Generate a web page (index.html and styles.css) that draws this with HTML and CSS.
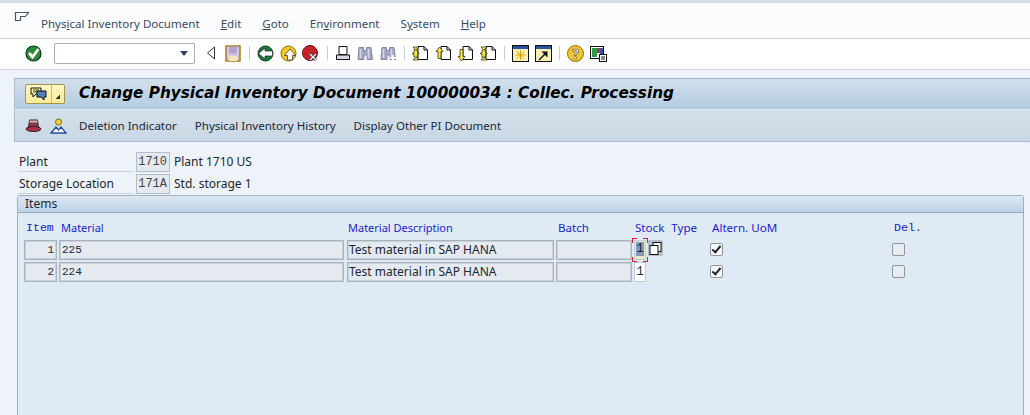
FILE: index.html
```html
<!DOCTYPE html>
<html lang="en">
<head>
  <meta charset="UTF-8">
  <title>Change Physical Inventory Document</title>
  <link rel="stylesheet" href="styles.css">
</head>
<body>
  <svg class="defs" width="0" height="0">
    <symbol id="page" viewBox="0 0 17 17">
      <path d="M6 1.500h6l3.500 3.500v9.500H6z" fill="#fff" stroke="#111"/><path d="M12 1.500V5h3.500" fill="none" stroke="#111"/>
    </symbol>
    <symbol id="binoc" viewBox="0 0 17 17">
      <path d="M2 2.500h4.500v3h3v-3H14l1.500 12h-5.500V10H7v4.500H1z" fill="#a4a9c6" stroke="#8187a8"/>
      <path d="M3.500 4v9M11.500 4v9" stroke="#d5d8e8" stroke-width="1.500"/>
    </symbol>
  </svg>

  <div class="menubar">
    <svg class="menu-icon" width="16" height="12" viewBox="0 0 16 12"><path d="M1.500 1.500h13l-3 4h-5v4h-5z" fill="none" stroke="#47566b" stroke-width="1.200"/></svg>
    <span class="menu-item">Phys<u>i</u>cal Inventory Document</span>
    <span class="menu-item"><u>E</u>dit</span>
    <span class="menu-item"><u>G</u>oto</span>
    <span class="menu-item">En<u>v</u>ironment</span>
    <span class="menu-item">S<u>y</u>stem</span>
    <span class="menu-item"><u>H</u>elp</span>
  </div>

  <div class="toolbar">
    <span class="tool"><svg width="17" height="17" viewBox="0 0 17 17"><circle cx="8.500" cy="8.500" r="7.500" fill="#2a8a38" stroke="#0c3a14" stroke-width="1.200"/><path d="M4 8l3.500 4L13.500 4" fill="none" stroke="#fff" stroke-width="2.800"/></svg></span>
    <span class="combo"><span class="combo-arrow"></span></span>
    <span class="tool tool-first"><svg width="10" height="14" viewBox="0 0 10 14"><path d="M8.500 1v12L1.500 7z" fill="#fff" stroke="#333"/></svg></span>
    <span class="tool"><svg width="16" height="17" viewBox="0 0 16 17"><rect x="1" y="1" width="14" height="15" fill="#d2c8e4" stroke="#b07a20" stroke-width="1.500"/><rect x="4" y="1.500" width="8" height="7" fill="#b3a3d2"/><rect x="4" y="11" width="8" height="5" fill="#f7e6ae"/></svg></span>
    <span class="sep"></span>
    <span class="tool"><svg width="17" height="17" viewBox="0 0 17 17"><circle cx="8.500" cy="8.500" r="7.500" fill="#157a35" stroke="#0b3d1a"/><path d="M1.500 8.500L8 3v3h7.500v5H8v3z" fill="#fff" stroke="#222" stroke-width=".7"/></svg></span>
    <span class="tool"><svg width="17" height="17" viewBox="0 0 17 17"><circle cx="8.500" cy="8.500" r="7.500" fill="#f4c81e" stroke="#8a6a0a"/><path d="M10 4l5.500 6.500h-3V15h-5v-4.500h-3z" fill="#fff" stroke="#222" stroke-width=".7"/></svg></span>
    <span class="tool"><svg width="17" height="17" viewBox="0 0 17 17"><circle cx="8" cy="8" r="7.500" fill="#c4202b" stroke="#6b0d14"/><path d="M8 9l6 6M14 9l-6 6" stroke="#333" stroke-width="2.600"/><path d="M8 9l6 6M14 9l-6 6" stroke="#fff" stroke-width="1.300"/></svg></span>
    <span class="sep"></span>
    <span class="tool"><svg width="16" height="16" viewBox="0 0 16 16"><path d="M4 1.500h8v8H4z" fill="#fff" stroke="#111"/><path d="M1.500 10h13v4.500h-13z" fill="#d3d9e4" stroke="#111"/></svg></span>
    <span class="tool"><svg width="17" height="17"><use href="#binoc"/></svg></span>
    <span class="tool"><svg width="17" height="17"><use href="#binoc"/><path d="M13 10v6M10 13h6" stroke="#fff" stroke-width="1.800"/></svg></span>
    <span class="sep"></span>
    <span class="tool"><svg width="17" height="17"><use href="#page"/><path d="M1 2h6L4 5h1.500v3H7v1H5.500v3H4l3 3H1l2.500-3H2V9H.5V8H2V5h1.500z" fill="#f4e43a" stroke="#222" stroke-width=".7"/></svg></span>
    <span class="tool"><svg width="17" height="17"><use href="#page"/><path d="M4.500 2L8 6.500H6v7H3v-7H1z" fill="#f4e43a" stroke="#222" stroke-width=".7"/></svg></span>
    <span class="tool"><svg width="17" height="17"><use href="#page"/><path d="M4.500 16L1 11.500h2v-7h3v7h2z" fill="#f4e43a" stroke="#222" stroke-width=".7"/></svg></span>
    <span class="tool"><svg width="17" height="17"><use href="#page"/><path d="M1 2h6L4 5h1.500v3H7v1H5.500v3H4l3 3H1l2.500-3H2V9H.5V8H2V5h1.500z" fill="#f4e43a" stroke="#222" stroke-width=".7"/></svg></span>
    <span class="sep"></span>
    <span class="tool"><svg width="17" height="17" viewBox="0 0 17 17"><rect x=".500" y=".500" width="16" height="16" fill="#f7efb4" stroke="#111"/><rect x="1" y="1" width="15" height="3" fill="#2b4f9c"/><path d="M8.500 5v10M3.500 10h10M5 6.500l7 7M12 6.500l-7 7" stroke="#d8a20f"/></svg></span>
    <span class="tool"><svg width="17" height="17" viewBox="0 0 17 17"><rect x=".500" y=".500" width="16" height="16" fill="#f7efb4" stroke="#111"/><rect x="1" y="1" width="15" height="3" fill="#2b4f9c"/><path d="M4 15l7-7" stroke="#111" stroke-width="1.500"/><path d="M6.500 6.500h6v6z" fill="#111"/></svg></span>
    <span class="sep"></span>
    <span class="tool"><svg width="17" height="17" viewBox="0 0 17 17"><circle cx="8.500" cy="8.500" r="8" fill="#f4c52a" stroke="#8a6a0a"/><text class="help-mark" x="8.500" y="13.500" text-anchor="middle">?</text></svg></span>
    <span class="tool"><svg width="17" height="17" viewBox="0 0 17 17"><rect x=".500" y="1.500" width="13" height="12" fill="#fff" stroke="#111"/><rect x="2" y="3" width="5" height="9" fill="#2f9a4a"/><rect x="7" y="3" width="3" height="5" fill="#c83333"/><rect x="10" y="3" width="3" height="6" fill="#3a4fb0"/><rect x="9.500" y="9.500" width="7" height="7" fill="#fff" stroke="#111"/><path d="M11 12h4M11 14h4" stroke="#111"/></svg></span>
  </div>

  <div class="screen">
    <div class="title-bar">
      <span class="title-btn">
        <span class="title-btn-main"><svg width="17" height="15" viewBox="0 0 17 15"><path d="M1 1h10v6H6L3 10V7H1z" fill="#fff6a8" stroke="#111"/><path d="M3 3h6M3 5h6" stroke="#111" stroke-width=".8"/><path d="M7 4h9v6h-2v3l-3-3H7z" fill="#4f7fbd" stroke="#111"/></svg></span>
        <span class="title-btn-arrow"></span>
      </span>
      <h1 class="title">Change Physical Inventory Document 100000034 : Collec. Processing</h1>
    </div>
    <div class="app-bar">
      <svg class="app-icon" width="17" height="15" viewBox="0 0 17 15"><path d="M4.500 2h8l1 8h-10z" fill="#8a3a4c" stroke="#3b1a22"/><path d="M4.500 3.500h8" stroke="#c9b8bd" stroke-width="2"/><ellipse cx="8.500" cy="11" rx="7.500" ry="2.500" fill="#a8324a" stroke="#3b1a22"/></svg>
      <svg class="app-icon" width="17" height="16" viewBox="0 0 17 16"><circle cx="8.500" cy="4" r="3" fill="#f4d23a" stroke="#7c6510"/><path d="M1 15l5-6 2.500 3 2.500-3 5 6z" fill="#fff" stroke="#1d4f9a" stroke-width="1.300"/></svg>
      <span class="app-btn app-btn-first">Deletion Indicator</span>
      <span class="app-btn">Physical Inventory History</span>
      <span class="app-btn">Display Other PI Document</span>
    </div>

    <div class="head-fields">
      <div class="head-row">
        <label class="head-label">Plant</label>
        <span class="head-value">1710</span>
        <span class="head-text">Plant 1710 US</span>
      </div>
      <div class="head-row">
        <label class="head-label">Storage Location</label>
        <span class="head-value">171A</span>
        <span class="head-text">Std. storage 1</span>
      </div>
    </div>

    <div class="group">
      <div class="group-title">Items</div>
      <div class="cols">
        <span class="col c-item mono">Item</span>
        <span class="col c-mat col-small">Material</span>
        <span class="col c-desc col-small">Material Description</span>
        <span class="col c-batch">Batch</span>
        <span class="col c-stock col-wide">Stock Type</span>
        <span class="col c-uom">Altern. UoM</span>
        <span class="col c-del mono">Del.</span>
      </div>
      <div class="row">
        <span class="cell c-item mono right">1</span>
        <span class="cell c-mat mono">225</span>
        <span class="cell c-desc">Test material in SAP HANA</span>
        <span class="cell c-batch"></span>
        <span class="stock-wrap">
          <span class="stock stock-focus mono"><span class="stock-sel">1</span></span>
          <span class="f4"><svg width="13" height="13" viewBox="0 0 13 13"><rect x="4" y=".500" width="8" height="9" fill="#fff" stroke="#111"/><rect x="1" y="3.500" width="8" height="9" fill="#fff" stroke="#111"/></svg></span>
        </span>
        <span class="check-slot c-uom"><span class="check on"></span></span>
        <span class="check-slot c-del"><span class="check"></span></span>
      </div>
      <div class="row">
        <span class="cell c-item mono right">2</span>
        <span class="cell c-mat mono">224</span>
        <span class="cell c-desc">Test material in SAP HANA</span>
        <span class="cell c-batch"></span>
        <span class="stock-wrap">
          <span class="stock mono">1</span>
        </span>
        <span class="check-slot c-uom"><span class="check on"></span></span>
        <span class="check-slot c-del"><span class="check"></span></span>
      </div>
    </div>
  </div>
</body>
</html>
```

FILE: styles.css
```css
html, body {
  margin: 0;
  height: 415px;
  overflow: hidden;
}

body {
  font-family: "Noto Sans", "Open Sans", sans-serif;
  font-size: 12px;
  color: #1c2733;
  background-color: #eef3f9;
}

.defs {
  position: absolute;
}

.mono {
  font-family: "Liberation Mono", monospace;
}

/* menu */
.menubar {
  height: 39px;
  box-sizing: border-box;
  display: flex;
  align-items: center;
  padding: 6px 0 0 14px;
  border-top: 3px solid #d5dde6;
  border-bottom: 1px solid #c9ced4;
  background-color: #fbfcfe;
  font-size: 11.55px;
}

.menu-icon {
  margin: -14px 11px 0 0;
}

.menu-item {
  margin-right: 21px;
  color: #3a4a63;
}

/* toolbar */
.toolbar {
  box-sizing: border-box;
  height: 31px;
  display: flex;
  align-items: center;
  padding: 0 0 2px 22px;
  background-color: #fff;
  border-bottom: 1px solid #cdd3d9;
}

.tool {
  width: 22.5px;
  display: flex;
  justify-content: center;
}

.tool-first {
  margin-left: 4.5px;
}

.sep {
  width: 10px;
  height: 14px;
  background: linear-gradient(#c4ced8, #c4ced8) center / 1px 100% no-repeat;
}

.help-mark {
  font-size: 14px;
  font-weight: bold;
  fill: #fff;
  stroke: #222;
  stroke-width: .5px;
}

.combo {
  width: 141px;
  height: 21px;
  box-sizing: border-box;
  margin-left: 9.5px;
  border: 1px solid #a9b0b8;
  border-radius: 2px;
  background-color: #fff;
  position: relative;
}

.combo-arrow {
  position: absolute;
  right: 6px;
  top: 7px;
  border-top: 5px solid #2d3f5c;
  border-left: 4px solid transparent;
  border-right: 4px solid transparent;
}

/* title */
.screen {
  margin: 8px 0 0 14px;
}

.title-bar {
  height: 30px;
  display: flex;
  align-items: center;
  border-top: 1px solid #9fb5c8;
  border-left: 1px solid #a9bccc;
  background: linear-gradient(#d2e0ec, #b3cbe0);
}

.title-btn {
  display: flex;
  height: 18px;
  margin-left: 10px;
  border: 1px solid #a8944c;
  border-radius: 2px;
  background: linear-gradient(#fdf8c4, #f8eb96);
}

.title-btn-main {
  width: 25px;
  display: flex;
  align-items: center;
  justify-content: center;
  border-right: 1px solid #c4b978;
}

.title-btn-arrow {
  width: 12px;
  background: linear-gradient(135deg, transparent 0 50%, #333 50%) 4px 10px / 4px 4px no-repeat;
}

.title {
  margin: 0 0 2px 14px;
  font-family: "DejaVu Sans", sans-serif;
  font-size: 15.25px;
  font-style: italic;
  font-weight: bold;
  color: #000;
  white-space: nowrap;
}

.app-bar {
  height: 31px;
  display: flex;
  align-items: center;
  padding-left: 10px;
  border-left: 1px solid #a9bccc;
  border-bottom: 1px solid #a9bccc;
  border-top: 1px solid #e4edf4;
  background: linear-gradient(#d4e1eb, #c8d7e4);
  font-size: 11.55px;
}

.app-icon {
  margin-right: 8px;
}

.app-btn {
  margin-right: 18px;
}

.app-btn-first {
  margin-left: 4px;
}

/* header fields */
.head-fields {
  margin: 9px 0 0 4px;
}

.head-row {
  display: flex;
  align-items: center;
  height: 21px;
  margin-bottom: 1px;
}

.head-label {
  width: 115px;
  height: 20px;
  line-height: 19px;
  box-sizing: border-box;
  padding-left: 1px;
  margin-right: 3px;
  border-bottom: 1px solid #c9d2da;
}

.head-value {
  width: 34px;
  height: 20px;
  box-sizing: border-box;
  line-height: 18px;
  text-align: right;
  padding-right: 2px;
  border: 1px solid #b5bfc8;
  background-color: #e4e9ef;
  font-family: "Liberation Mono", monospace;
  color: #444;
}

.head-text {
  margin-left: 4px;
}

/* items group */
.group {
  margin: 0 6px 0 3px;
  height: 220px;
  box-sizing: border-box;
  border: 1px solid #9db2c5;
  border-bottom: none;
  border-radius: 3px 3px 0 0;
  background-color: #dfeaf5;
}

.group-title {
  height: 16px;
  line-height: 15px;
  padding-left: 7px;
  border-bottom: 1px solid #93a9bd;
  background: linear-gradient(#dce8f2, #bed3e6);
}

.cols {
  display: flex;
  margin: 4px 0 0 0;
  height: 23px;
  line-height: 22px;
  color: #1a1ec8;
  font-size: 11.6px;
}

.col {
  display: block;
  box-sizing: border-box;
  white-space: nowrap;
}

.col-small {
  font-size: 11px;
}

.col-wide {
  word-spacing: 4px;
}

.c-item { width: 33px; margin-left: 6px; }
.c-mat { width: 285px; margin-left: 2px; }
.c-desc { width: 207px; margin-left: 3px; }
.c-batch { width: 76px; margin-left: 2px; }
.c-stock { width: 74px; margin-left: 3px; }
.c-uom { width: 182px; margin-left: 3px; }
.c-del { width: 30px; }

.col.c-item { padding-left: 2px; }
.col.c-mat { padding-left: 2px; }
.col.c-desc { padding-left: 1px; }
.col.c-batch { padding-left: 2px; }

.row {
  display: flex;
  align-items: center;
  height: 20px;
  margin-bottom: 2px;
}

.cell {
  height: 20px;
  box-sizing: border-box;
  line-height: 18px;
  padding: 0 1px;
  border: 1px solid #a9b3bc;
  box-shadow: inset 0 0 0 1px #c8d0d8;
  background-color: #e4eaf0;
  white-space: nowrap;
}

.cell.mono {
  font-size: 11px;
  padding: 0 2px;
}

.right {
  text-align: right;
}

.stock-wrap {
  display: flex;
  width: 74px;
  margin-left: 2px;
}

.stock {
  width: 12px;
  height: 20px;
  box-sizing: border-box;
  line-height: 18px;
  text-align: center;
  border: 1px solid #c3ccd4;
  background-color: #fff;
}

/* red corner brackets round the field with the cursor */
.stock-focus {
  position: relative;
  background-color: #eceac4;
}

.stock-focus::after {
  content: "";
  position: absolute;
  left: -3px;
  right: -3px;
  top: -3px;
  bottom: -3px;
  background:
    linear-gradient(#d02030, #d02030) 0 0 / 5px 1px no-repeat,
    linear-gradient(#d02030, #d02030) 0 0 / 1px 5px no-repeat,
    linear-gradient(#d02030, #d02030) 100% 0 / 5px 1px no-repeat,
    linear-gradient(#d02030, #d02030) 100% 0 / 1px 5px no-repeat,
    linear-gradient(#d02030, #d02030) 0 100% / 5px 1px no-repeat,
    linear-gradient(#d02030, #d02030) 0 100% / 1px 5px no-repeat,
    linear-gradient(#d02030, #d02030) 100% 100% / 5px 1px no-repeat,
    linear-gradient(#d02030, #d02030) 100% 100% / 1px 5px no-repeat;
}

.stock-sel {
  display: block;
  background-color: #7f9cbb;
  height: 14px;
  line-height: 14px;
  margin: 1px;
}

.f4 {
  width: 15px;
  height: 16px;
  margin-left: 2px;
  display: flex;
  align-items: center;
  justify-content: center;
  background-color: #b0bfce;
  border-radius: 0 2px 2px 0;
}

.check-slot {
  display: flex;
}

.check {
  width: 11px;
  height: 11px;
  margin: -1px 0 0 -1px;
  border: 1px solid #8e959c;
  border-radius: 2px;
  background-color: #e8edf2;
  position: relative;
}

.check.on {
  background-color: #f5f7f9;
}

.check.on::after {
  content: "";
  position: absolute;
  left: 3px;
  top: 0;
  width: 3px;
  height: 7px;
  border: solid #222;
  border-width: 0 2px 2px 0;
  transform: rotate(40deg);
}
```
